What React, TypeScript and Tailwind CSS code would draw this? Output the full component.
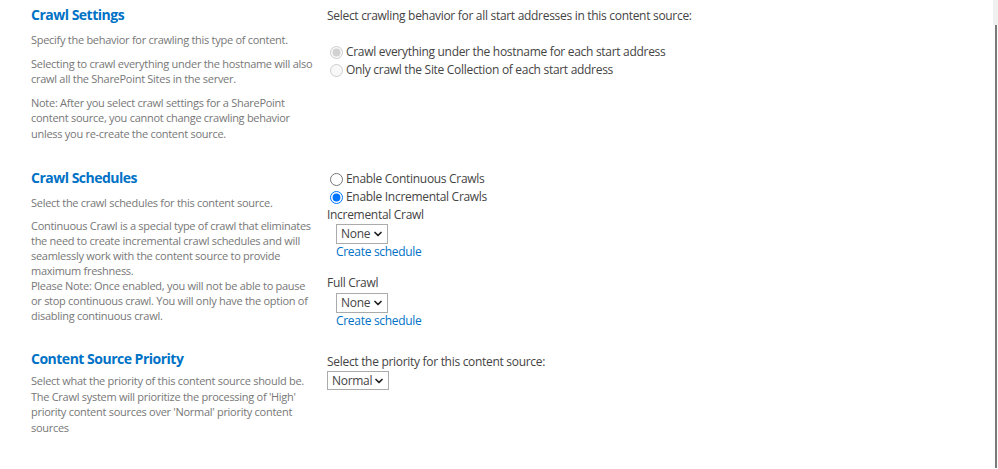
import { ChevronDown } from "lucide-react";

const FONT = { fontFamily: '"Open Sans", "Noto Sans", sans-serif' };

function Heading({ children }: { children: React.ReactNode }) {
  return (
    <h3 className="text-[14px] leading-[22px] font-bold tracking-[-0.5px] text-[#0072c6]">
      {children}
    </h3>
  );
}

function Desc({ children, first }: { children: React.ReactNode; first?: boolean }) {
  return (
    <p
      className={`text-[11px] leading-[15.5px] tracking-[-0.28px] text-[#777777] ${first ? "mt-[6px]" : "mt-[8px]"}`}
    >
      {children}
    </p>
  );
}

function FakeSelect({ value, className }: { value: string; className?: string }) {
  return (
    <div
      className={`flex items-center justify-between border border-[#ababab] bg-white pl-[4px] pr-[3px] text-[12px] text-[#444444] ${className ?? ""}`}
    >
      <span>{value}</span>
      <ChevronDown className="size-[12px]" strokeWidth={3.5} color="#222" />
    </div>
  );
}

function Radio({
  label,
  checked,
  disabled,
  name,
}: {
  label: string;
  checked?: boolean;
  disabled?: boolean;
  name: string;
}) {
  return (
    <label className="flex h-[18px] items-center gap-[3px] pl-[3px]">
      <input
        type="radio"
        name={name}
        defaultChecked={checked}
        disabled={disabled}
        className="m-0 size-[13px]"
      />
      <span>{label}</span>
    </label>
  );
}

export default function App() {
  return (
    <div className="flex h-[469px] w-full bg-white" style={FONT}>
      <main className="flex flex-1 flex-col">
        {/* Crawl Settings */}
        <section className="flex pt-[4px] pb-[22px]">
          <div className="ml-[31px] w-[284px]">
            <Heading>Crawl Settings</Heading>
            <Desc first>Specify the behavior for crawling this type of content.</Desc>
            <Desc>
              Selecting to crawl everything under the hostname will also crawl all the
              SharePoint Sites in the server.
            </Desc>
            <Desc>
              Note: After you select crawl settings for a SharePoint content source, you
              cannot change crawling behavior unless you re-create the content source.
            </Desc>
          </div>
          <div className="ml-[12px] pt-[3px] text-[12px] leading-[18px] tracking-[-0.3px] text-[#444444]">
            <p>Select crawling behavior for all start addresses in this content source:</p>
            <div className="mt-[18px] flex flex-col">
              <Radio name="scope" label="Crawl everything under the hostname for each start address" checked disabled />
              <Radio name="scope" label="Only crawl the Site Collection of each start address" disabled />
            </div>
          </div>
        </section>

        {/* Crawl Schedules */}
        <section className="flex pt-[4px] pb-[14px]">
          <div className="ml-[31px] w-[284px]">
            <Heading>Crawl Schedules</Heading>
            <Desc first>Select the crawl schedules for this content source.</Desc>
            <p className="mt-[7px] text-[11px] leading-[15px] tracking-[-0.28px] text-[#777777]">
              Continuous Crawl is a special type of crawl that eliminates the need to create
              incremental crawl schedules and will seamlessly work with the content source to
              provide maximum freshness.
              <br />
              Please Note: Once enabled, you will not be able to pause
              <br />
              or stop continuous crawl. You will only have the option of disabling continuous
              crawl.
            </p>
          </div>
          <div className="ml-[12px] pt-[3px] text-[12px] leading-[18px] tracking-[-0.3px] text-[#444444]">
            <Radio name="mode" label="Enable Continuous Crawls" />
            <Radio name="mode" label="Enable Incremental Crawls" checked />
            <p>Incremental Crawl</p>
            <FakeSelect value="None" className="ml-[9px] h-[20px] w-[52px]" />
            <a href="#" className="-mt-[1px] ml-[9px] block text-[#0072c6]">
              Create schedule
            </a>
            <p className="mt-[13px]">Full Crawl</p>
            <FakeSelect value="None" className="ml-[9px] mt-[1px] h-[20px] w-[52px]" />
            <a href="#" className="-mt-[1px] ml-[9px] block text-[#0072c6]">
              Create schedule
            </a>
          </div>
        </section>

        {/* Content Source Priority */}
        <section className="flex pt-[4px]">
          <div className="ml-[31px] w-[284px]">
            <Heading>Content Source Priority</Heading>
            <p className="mt-[3px] text-[11px] leading-[15.5px] tracking-[-0.28px] text-[#777777]">
              Select what the priority of this content source should be. The Crawl system
              will prioritize the processing of 'High' priority content sources over
              'Normal' priority content sources
            </p>
          </div>
          <div className="ml-[12px] pt-[5px] text-[12px] leading-[18px] tracking-[-0.3px] text-[#444444]">
            <p>Select the priority for this content source:</p>
            <FakeSelect value="Normal" className="h-[19px] w-[62px]" />
          </div>
        </section>
      </main>

      <aside className="flex w-[5px] flex-col bg-[#fcfcfc]">
        <div className="h-[25px] bg-[#f0f0f0]" />
        <div className="flex-1 pb-[1px]">
          <div className="ml-[2px] h-full w-[2px] bg-[#7a7a7a]" />
        </div>
      </aside>
    </div>
  );
}
